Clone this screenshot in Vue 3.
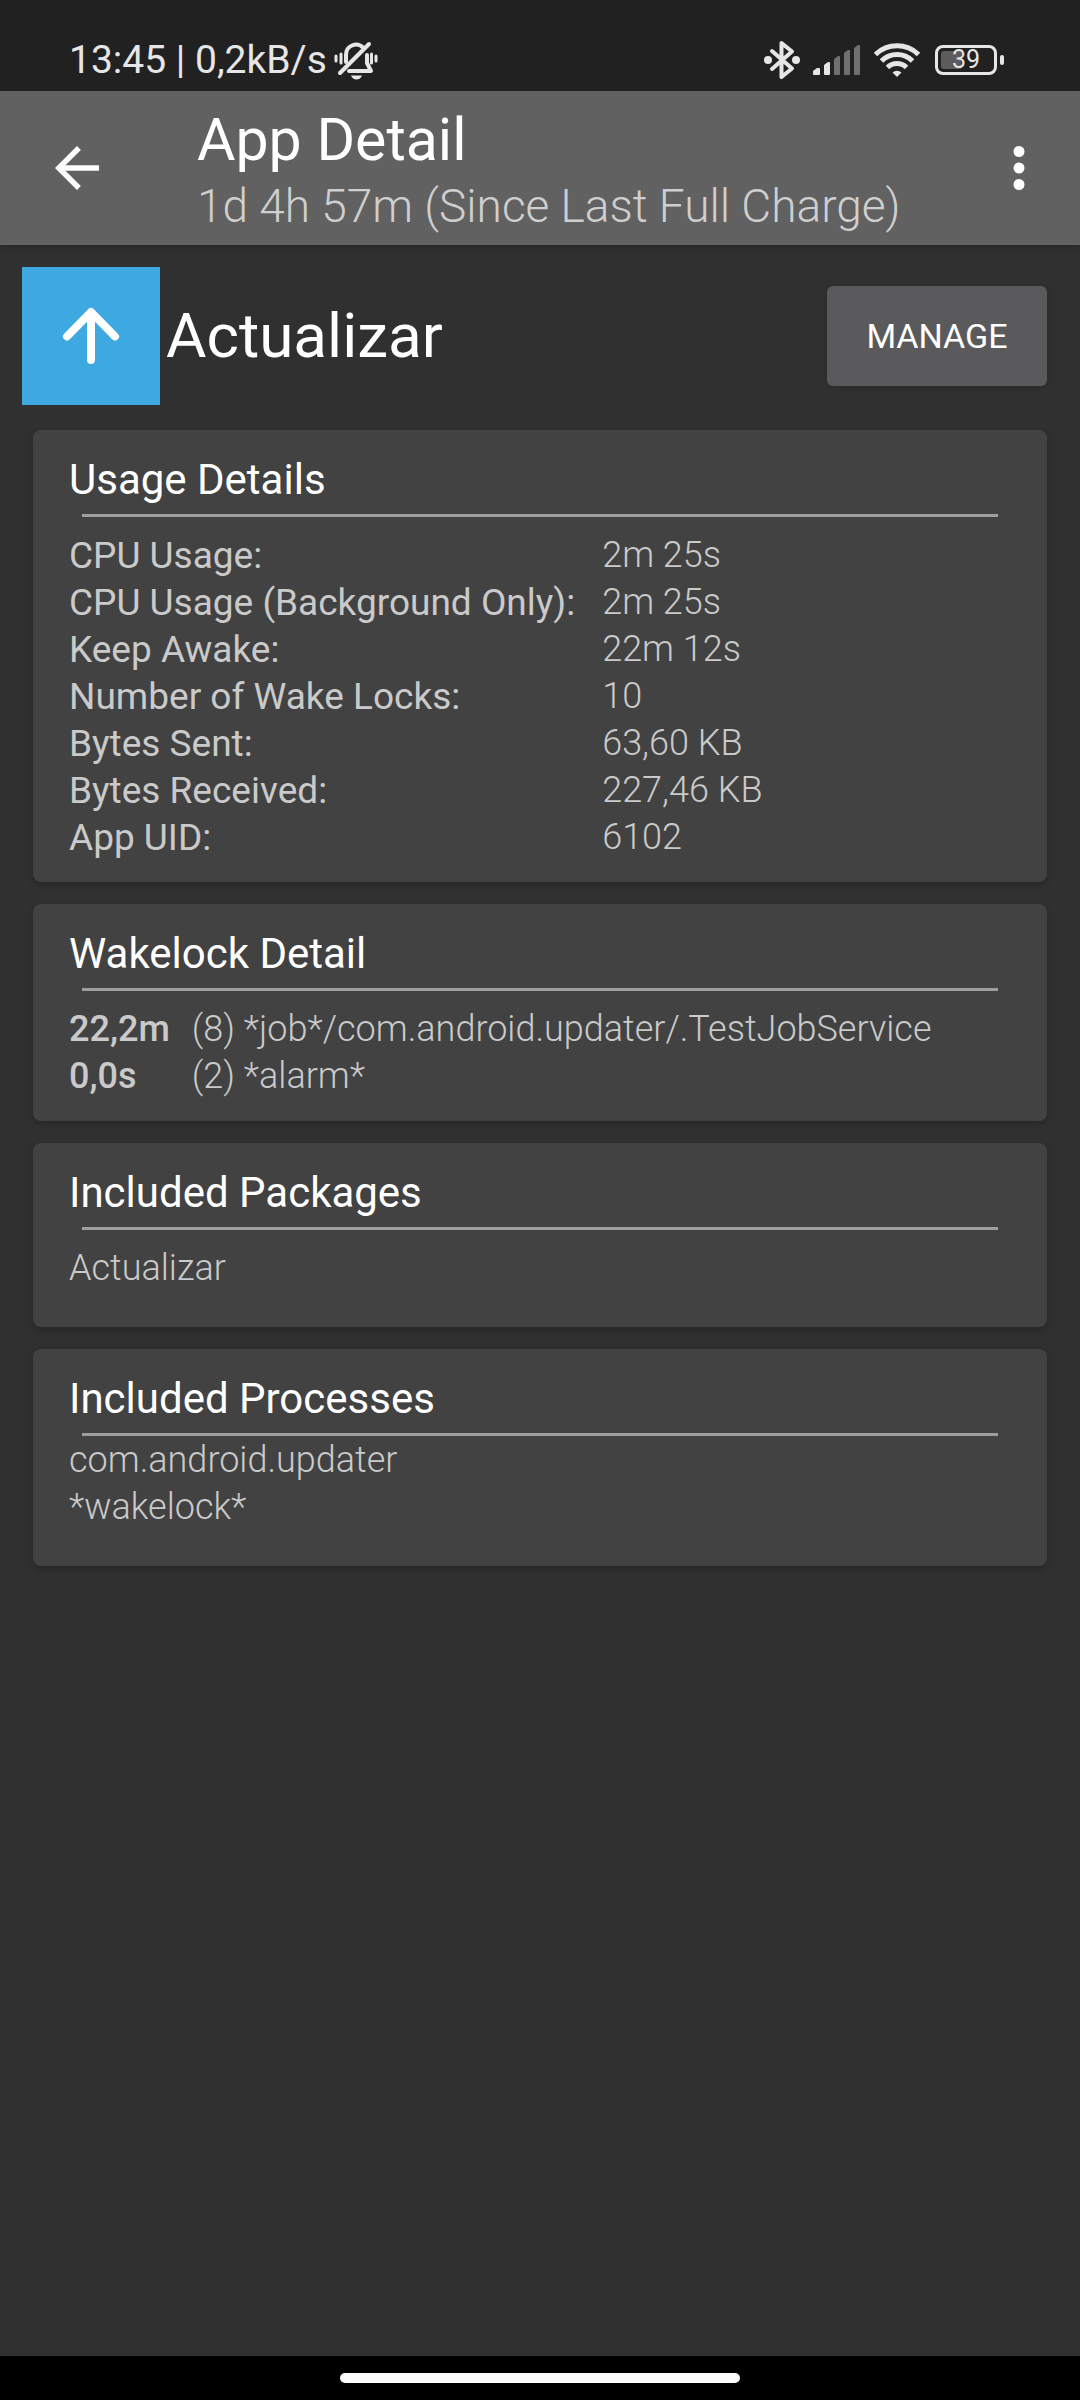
<script setup>
const usage = [
  { label: 'CPU Usage:', value: '2m 25s' },
  { label: 'CPU Usage (Background Only):', value: '2m 25s' },
  { label: 'Keep Awake:', value: '22m 12s' },
  { label: 'Number of Wake Locks:', value: '10' },
  { label: 'Bytes Sent:', value: '63,60 KB' },
  { label: 'Bytes Received:', value: '227,46 KB' },
  { label: 'App UID:', value: '6102' },
]
const wakelocks = [
  { time: '22,2m', name: '(8) *job*/com.android.updater/.TestJobService' },
  { time: '0,0s', name: '(2) *alarm*' },
]
const packages = ['Actualizar']
const processes = ['com.android.updater', '*wakelock*']
const battery = 39
</script>

<template>
  <div class="screen">
    <div class="status">
      <span class="clock">13:45 | 0,2kB/s</span>
      <svg class="bell" width="46" height="40" viewBox="0 0 46 40" fill="none" stroke="#e6e6e6" stroke-width="4" stroke-linecap="round" stroke-linejoin="round" aria-hidden="true">
        <path d="M13 22v-7a10 10 0 0 1 17-7.500M34 15v8l4 8H16" />
        <path d="M36 4L7 33" />
        <path d="M3 16v5M8 14v9M38.500 14v9M43 16v5" stroke-width="3" />
        <path d="M18 35.500h11c-1 2.500-3 4-5.500 4s-4.500-1.500-5.500-4z" fill="#e6e6e6" stroke="none" />
      </svg>
      <div class="indicators">
        <svg class="bluetooth" width="36" height="40" viewBox="0 0 36 40" fill="none" stroke="#e6e6e6" stroke-width="4" stroke-linecap="round" stroke-linejoin="round" aria-hidden="true">
          <path d="M8 11l20 17.500L17.500 37V3L28 11.500 8 29" />
          <circle cx="4" cy="20" r="4" fill="#e6e6e6" stroke="none" />
          <circle cx="32" cy="20" r="4" fill="#e6e6e6" stroke="none" />
        </svg>
        <svg class="signal" width="48" height="32" viewBox="0 0 48 32" aria-hidden="true">
          <path d="M0 27l4-3h2q1 0 1 1v5q0 1-1 1H1q-1 0-1-1zM11 21l4-3h1q1 0 1 1v11q0 1-1 1h-4q-1 0-1-1z" fill="#e6e6e6" />
          <path d="M21 15l4-3h1q1 0 1 1v17q0 1-1 1h-4q-1 0-1-1zM31 9l4-3h1q1 0 1 1v23q0 1-1 1h-4q-1 0-1-1zM41 4l4-3h1q1 0 1 1v28q0 1-1 1h-4q-1 0-1-1z" fill="#707070" />
        </svg>
        <svg class="wifi" width="46" height="34" viewBox="0 0 46 34" fill="none" stroke="#e6e6e6" stroke-width="5" aria-hidden="true">
          <path d="M1.500 11.500a31 31 0 0 1 43 0" />
          <path d="M7.500 18a22 22 0 0 1 31 0" />
          <path d="M13.500 24.500a13.500 13.500 0 0 1 19 0" />
          <path d="M23 34l-4.500-4.500a6.500 6.500 0 0 1 9 0z" fill="#e6e6e6" stroke="none" />
        </svg>
        <div class="battery">
          <div class="cell">
            <div class="level"><div class="charge" :style="{ width: battery + '%' }"></div></div>
            <span class="percent">{{ battery }}</span>
          </div>
          <div class="nub"></div>
        </div>
      </div>
    </div>

    <header class="toolbar">
      <button class="icon-button" type="button" aria-label="Back">
        <svg width="66" height="66" viewBox="0 0 24 24" fill="#fff"><path d="M20 11H7.830l5.590-5.590L12 4l-8 8 8 8 1.410-1.410L7.830 13H20v-2z" /></svg>
      </button>
      <div class="titles">
        <h1>App Detail</h1>
        <p>1d 4h 57m (Since Last Full Charge)</p>
      </div>
      <button class="icon-button" type="button" aria-label="More options">
        <svg width="66" height="66" viewBox="0 0 24 24" fill="#fff"><path d="M12 8a2 2 0 1 0 0-4 2 2 0 0 0 0 4zm0 2a2 2 0 1 0 0 4 2 2 0 0 0 0-4zm0 6a2 2 0 1 0 0 4 2 2 0 0 0 0-4z" /></svg>
      </button>
    </header>

    <main>
      <div class="app-row">
        <svg class="app-icon" width="138" height="138" viewBox="0 0 138 138" aria-hidden="true">
          <rect width="138" height="138" fill="#3ea8e0" />
          <path d="M69 93V46M45 69.500L69 45l24 24.500" fill="none" stroke="#fff" stroke-width="8" stroke-linecap="round" stroke-linejoin="round" />
        </svg>
        <h2>Actualizar</h2>
        <button class="manage" type="button">MANAGE</button>
      </div>

      <section class="card">
        <h3>Usage Details</h3>
        <table class="usage">
          <tbody>
            <tr v-for="row in usage" :key="row.label">
              <th scope="row">{{ row.label }}</th>
              <td>{{ row.value }}</td>
            </tr>
          </tbody>
        </table>
      </section>

      <section class="card">
        <h3>Wakelock Detail</h3>
        <table>
          <tbody>
            <tr v-for="row in wakelocks" :key="row.name">
              <th scope="row">{{ row.time }}</th>
              <td>{{ row.name }}</td>
            </tr>
          </tbody>
        </table>
      </section>

      <section class="card roomy">
        <h3>Included Packages</h3>
        <ul>
          <li v-for="item in packages" :key="item">{{ item }}</li>
        </ul>
      </section>

      <section class="card roomy tight-head">
        <h3>Included Processes</h3>
        <ul>
          <li v-for="item in processes" :key="item">{{ item }}</li>
        </ul>
      </section>
    </main>

    <div class="navbar"><div class="handle"></div></div>
  </div>
</template>

<style>
body {
  margin: 0;
  background: #303030;
}
</style>

<style scoped>
.screen {
  display: flex;
  flex-direction: column;
  min-height: 100vh;
  background: #303030;
  color: #cacaca;
  font-family: Roboto, "Noto Sans", sans-serif;
  font-size: 36px;
  font-weight: 300;
  line-height: 47px;
}
h1, h2, h3, p, ul {
  margin: 0;
  padding: 0;
}
button {
  border: 0;
  padding: 0;
  font-family: inherit;
  color: #fff;
}
.status {
  display: flex;
  align-items: center;
  height: 62px;
  padding: 29px 76px 0 69px;
  background: #212121;
  color: #e6e6e6;
}
.clock {
  font-size: 39px;
  font-weight: 400;
}
.bell {
  margin-left: 6px;
}
.indicators {
  display: flex;
  align-items: center;
  margin-left: auto;
}
.signal {
  margin-left: 13px;
}
.wifi {
  margin-left: 13px;
}
.battery {
  display: flex;
  align-items: center;
  gap: 3px;
  margin-left: 15px;
}
.cell {
  position: relative;
  display: flex;
  align-items: center;
  justify-content: center;
  box-sizing: border-box;
  width: 62px;
  height: 30px;
  border: 3px solid #e6e6e6;
  border-radius: 8px;
}
.level {
  position: absolute;
  inset: 3px;
}
.charge {
  height: 100%;
  border-radius: 3px 0 0 3px;
  background: #5c5c5c;
}
.percent {
  position: relative;
  font-size: 25px;
  font-weight: 400;
  line-height: 24px;
}
.nub {
  width: 4px;
  height: 10px;
  border-radius: 2px;
  background: #e6e6e6;
}
.toolbar {
  display: flex;
  align-items: center;
  padding: 0 28px 0 44px;
  background: #616161;
  box-shadow: 0 2px 8px rgba(0, 0, 0, 0.2);
}
.icon-button {
  display: flex;
  background: none;
}
.titles {
  display: flex;
  flex-direction: column;
  flex: 1;
  gap: 8px;
  padding: 18px 0 12px 87px;
}
h1 {
  color: #fff;
  font-size: 59px;
  font-weight: 400;
  line-height: 62px;
}
.titles p {
  color: #cfcfcf;
  font-size: 46px;
  line-height: 54px;
}
main {
  display: flex;
  flex-direction: column;
  flex: 1;
  gap: 22px;
  padding: 22px 33px;
}
.app-row {
  display: flex;
  align-items: center;
  margin: 0 0 3px -11px;
}
h2 {
  margin-left: 6px;
  color: #fff;
  font-size: 62px;
  font-weight: 400;
  line-height: 72px;
}
.manage {
  width: 220px;
  height: 100px;
  margin-left: auto;
  border-radius: 6px;
  background: #5a5a5c;
  box-shadow: 0 1px 5px rgba(0, 0, 0, 0.15);
  font-size: 34px;
  font-weight: 400;
}
.card {
  padding: 25px 36px 21px;
  border-radius: 8px;
  background: #424242;
  box-shadow: 0 3px 6px rgba(0, 0, 0, 0.2);
}
.roomy {
  padding-bottom: 35px;
}
h3 {
  color: #fff;
  font-size: 42px;
  font-weight: 400;
  line-height: 50px;
}
h3::after {
  content: "";
  display: block;
  height: 3px;
  margin: 9px 13px 15px;
  background: #9e9e9e;
}
.tight-head h3::after {
  margin-bottom: 1px;
}
table {
  border-collapse: collapse;
}
th {
  padding: 0 22px 0 0;
  font-weight: 500;
  text-align: left;
}
.usage th {
  padding-right: 27px;
  font-size: 37px;
  font-weight: 400;
}
td {
  padding: 0;
}
ul {
  list-style: none;
}
.navbar {
  display: flex;
  justify-content: center;
  padding: 17px 0;
  background: #000;
}
.handle {
  width: 37%;
  height: 10px;
  border-radius: 5px;
  background: #fff;
}
</style>
